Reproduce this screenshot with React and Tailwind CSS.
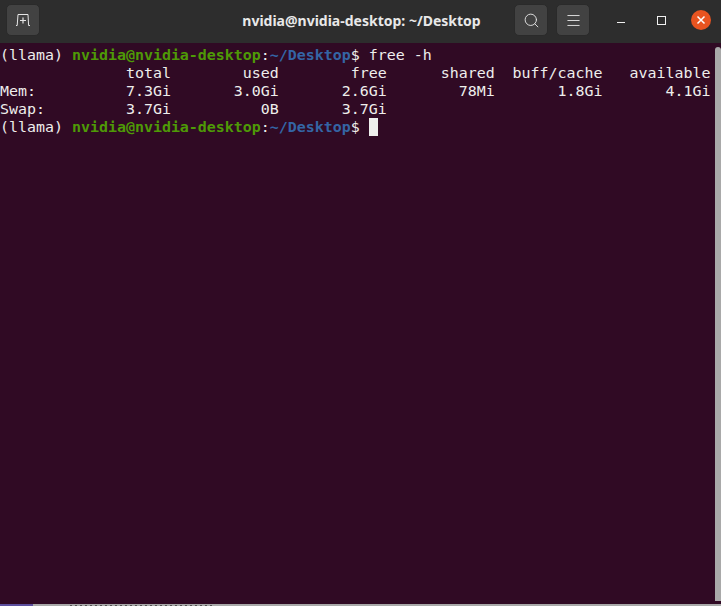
import { Search, Menu } from 'lucide-react'

const OUTPUT = [
  '              total        used        free      shared  buff/cache   available',
  'Mem:          7.3Gi       3.0Gi       2.6Gi        78Mi       1.8Gi       4.1Gi',
  'Swap:         3.7Gi          0B       3.7Gi',
]

function Prompt({ children }) {
  return (
    <div className="h-[18px]">
      <span>(llama) </span>
      <span className="font-bold text-[#4e9a06]">nvidia@nvidia-desktop</span>
      <span>:</span>
      <span className="font-bold text-[#3465a4]">~/Desktop</span>
      <span>$ </span>
      {children}
    </div>
  )
}

function HeaderButton({ children }) {
  return (
    <button className="w-[34px] h-[32px] flex items-center justify-center rounded-[5px] bg-[#424242] border border-[#2a2a2a] text-[#e6e6e6]">
      {children}
    </button>
  )
}

export default function App() {
  return (
    <div className="w-[721px] h-[606px] flex flex-col overflow-hidden bg-[#300a24]">
      {/* Title bar */}
      <div className="h-[43px] shrink-0 bg-[#2d2d2d] grid grid-cols-[1fr_auto_1fr] items-center pl-[6px] pr-[10px] pb-[3px]">
        <div className="flex">
          <HeaderButton>
            <svg width="16" height="16" viewBox="0 0 16 16" fill="none" stroke="#e6e6e6" strokeWidth="1">
              <path d="M1 13.5h1.2L3 2.5h10l.6 11H15" />
              <path d="M8 5.5v6M5 8.5h6" strokeWidth="1.2" />
            </svg>
          </HeaderButton>
        </div>
        <div className="ml-[6px] text-[14px] font-bold text-[#e8e8e8] font-['Noto_Sans',sans-serif]">
          nvidia@nvidia-desktop: ~/Desktop
        </div>
        <div className="flex items-center justify-end">
          <div className="flex items-center gap-[8px]">
            <HeaderButton>
              <Search size={17} strokeWidth={1.3} />
            </HeaderButton>
            <HeaderButton>
              <Menu size={17} strokeWidth={1.3} />
            </HeaderButton>
          </div>
          <div className="w-[8px] h-[1px] mt-[4px] ml-[27px] bg-[#f0f0f0]" />
          <div className="w-[9px] h-[9px] ml-[32px] border border-[#f0f0f0]" />
          <div className="w-[20px] h-[20px] ml-[25px] rounded-full bg-[#e95420] flex items-center justify-center">
            <svg width="10" height="10" viewBox="0 0 10 10" stroke="#ffffff" strokeWidth="1.5">
              <path d="M1.5 1.5l7 7M8.5 1.5l-7 7" />
            </svg>
          </div>
        </div>
      </div>

      {/* Terminal */}
      <div className="flex-1 flex min-h-0">
        <div className="flex-1 min-w-0 pt-[3px] whitespace-pre text-[14.95px] leading-[18px] text-[#eeeeec] font-['DejaVu_Sans_Mono',monospace]">
          <Prompt>free -h</Prompt>
          {OUTPUT.map(line => (
            <div key={line} className="h-[18px]">{line}</div>
          ))}
          <Prompt>
            <span className="inline-block w-[9px] h-[18px] bg-[#eeeeec] align-top" />
          </Prompt>
        </div>
        <div className="w-[6px] shrink-0 mt-[4px] mb-[3px] rounded-t-[3px] bg-[#a9a9a9]" />
      </div>

      {/* Edge of the window behind */}
      <div className="h-[2px] shrink-0 flex bg-[#a9a9a9]">
        <div className="w-[33px] bg-[#5c4f9e]" />
        <div className="w-[37px]" />
        <div className="w-[145px] h-[1px] mt-[1px] bg-[repeating-linear-gradient(90deg,#555555_0px,#555555_2px,transparent_2px,transparent_5px)]" />
      </div>
    </div>
  )
}
